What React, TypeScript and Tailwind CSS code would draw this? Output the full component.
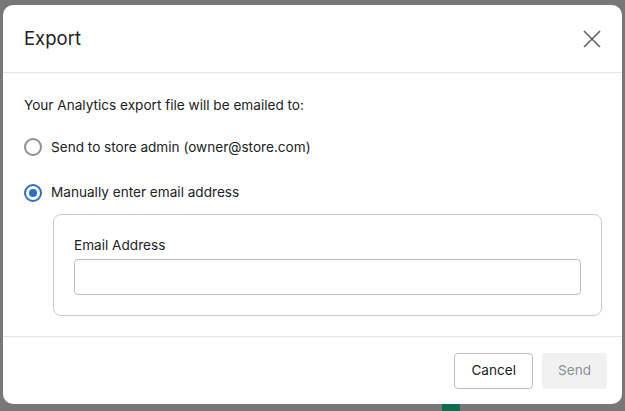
import React, { useState } from 'react';

// Export dialog over a dimmed page

function Radio({ checked, label, onSelect }: { checked: boolean; label: string; onSelect: () => void }) {
  return (
    <label className="flex items-center gap-[9px] cursor-pointer" onClick={onSelect}>
      <span
        className={`w-[18px] h-[18px] rounded-full border-2 flex items-center justify-center bg-white ${
          checked ? 'border-[#2c6ecb]' : 'border-[#8c9196]'
        }`}
      >
        {checked && <span className="w-[8px] h-[8px] rounded-full bg-[#2c6ecb]" />}
      </span>
      <span className="text-[13.6px] text-[#202223]">{label}</span>
    </label>
  );
}

export default function App() {
  const [modo, setModo] = useState<'admin' | 'manual'>('manual');

  return (
    <div
      className="w-[625px] h-[411px] bg-[#777777] overflow-hidden pt-[5px] px-[3px]"
      style={{ fontFamily: 'Inter, "Liberation Sans", sans-serif' }}
    >
      <div className="bg-white rounded-[10px] h-[399px] flex flex-col">
        {/* Header */}
        <div className="h-[68px] flex items-center justify-between pl-[21px] pr-[20px] border-b border-[#e1e3e5]">
          <h1 className="text-[18.5px] text-[#202223]">Export</h1>
          <svg width="20" height="20" viewBox="0 0 20 20" fill="none" stroke="#5c5f62" strokeWidth="1.6">
            <path d="M2 2 L18 18 M18 2 L2 18" />
          </svg>
        </div>

        {/* Body */}
        <div className="flex-1 pl-[21px] pr-[20px] pt-[22px] border-b border-[#e1e3e5]">
          <p className="text-[13.6px] text-[#202223] leading-[20px]">Your Analytics export file will be emailed to:</p>
          <div className="mt-[22px] flex flex-col gap-[25px]">
            <Radio checked={modo === 'admin'} label="Send to store admin (owner@store.com)" onSelect={() => setModo('admin')} />
            <Radio checked={modo === 'manual'} label="Manually enter email address" onSelect={() => setModo('manual')} />
          </div>
          <div className="ml-[29px] mt-[11px] border border-[#c9cccf] rounded-[8px] px-[20px] pt-[20px] pb-[20px]">
            <label className="block text-[13.6px] text-[#202223] leading-[20px]">Email Address</label>
            <input
              type="email"
              className="mt-[4px] w-full h-[36px] border border-[#babfc3] rounded-[4px] px-3 text-[14px] outline-none"
            />
          </div>
        </div>

        {/* Footer */}
        <div className="h-[67px] flex items-center justify-end gap-[9px] pr-[15px]">
          <button className="h-[36px] px-[16px] border border-[#babfc3] rounded-[4px] bg-white text-[13.6px] text-[#202223]">
            Cancel
          </button>
          <button className="h-[36px] px-[16px] rounded-[4px] bg-[#f1f1f1] text-[13.6px] text-[#8c9196]" disabled>
            Send
          </button>
        </div>
      </div>
      <div className="ml-[439px] w-[18px] h-[10px] bg-[#0b6e4f]" />
    </div>
  );
}
